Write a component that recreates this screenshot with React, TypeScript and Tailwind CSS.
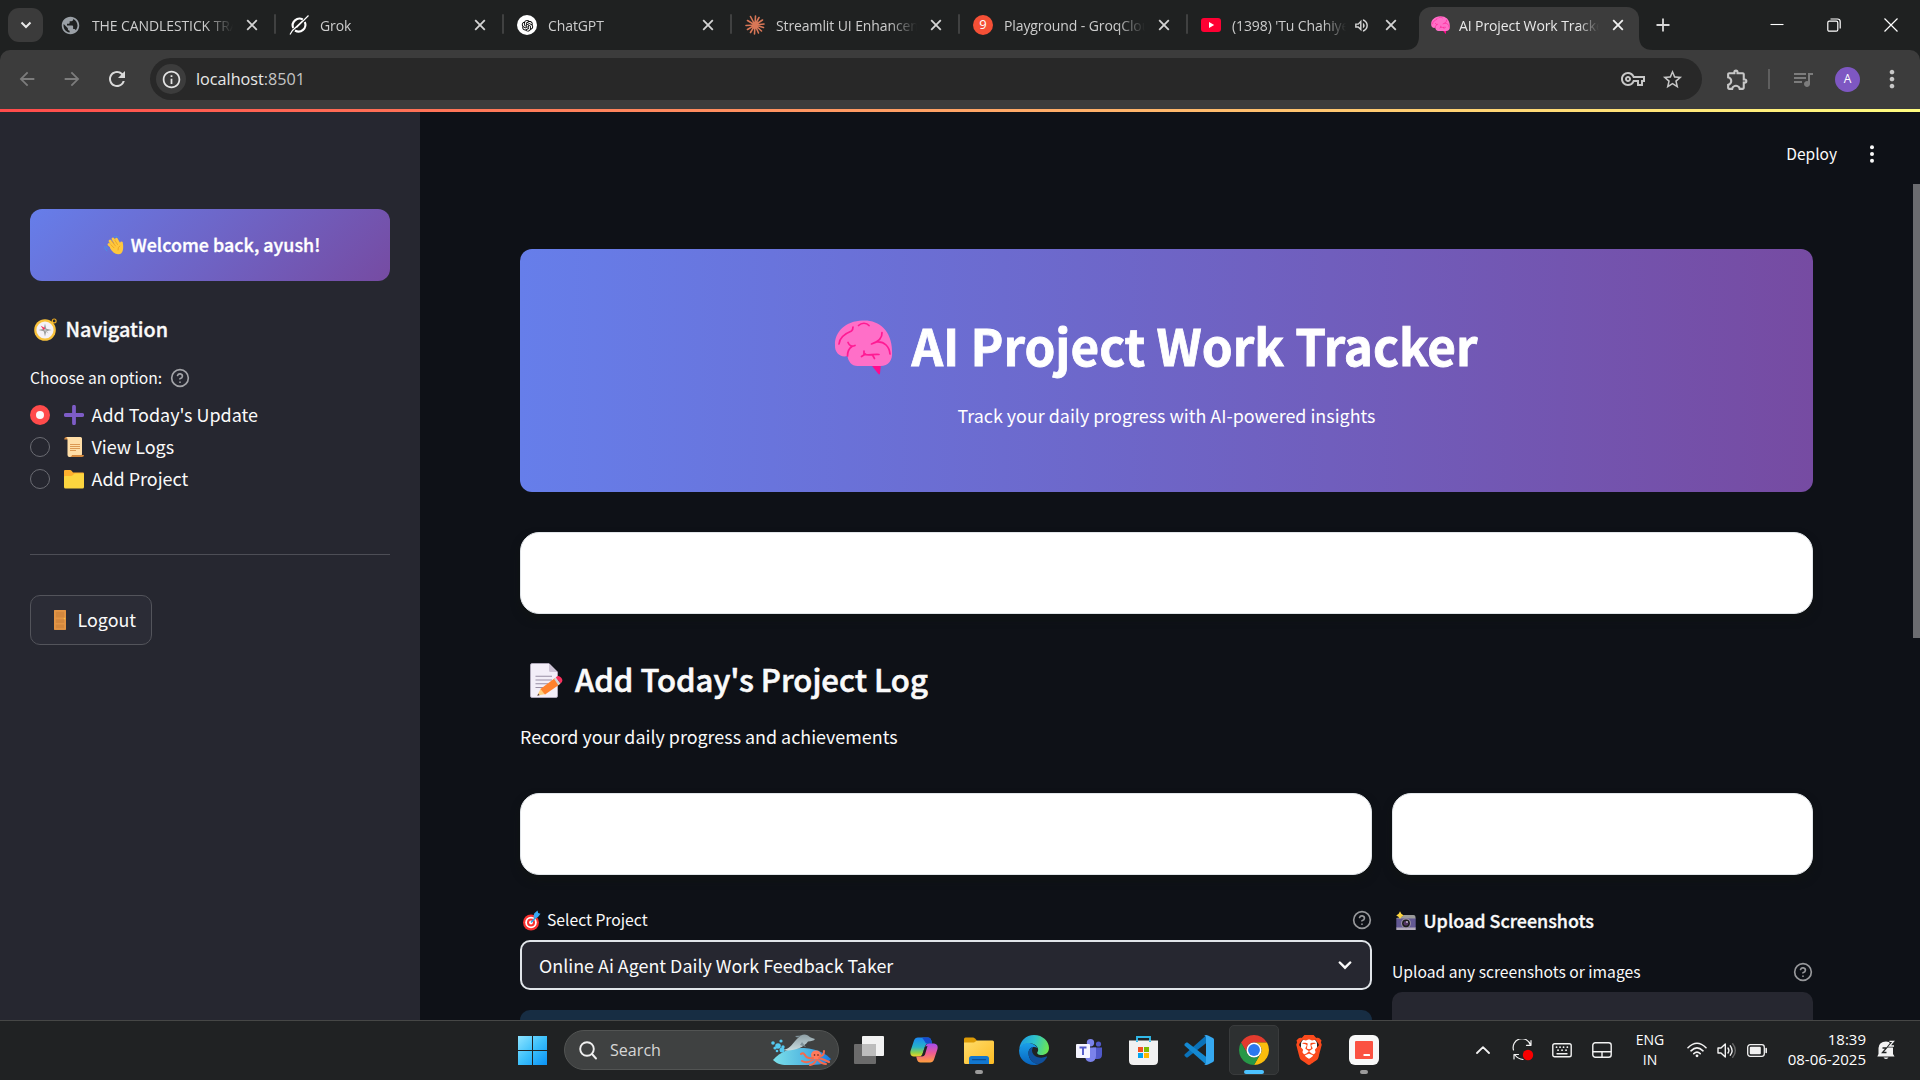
import type { ReactNode } from "react";
import {
  MdArrowBack,
  MdArrowForward,
  MdRefresh,
  MdInfoOutline,
  MdStarBorder,
  MdOutlineVpnKey,
  MdOutlineExtension,
  MdQueueMusic,
  MdMoreVert,
  MdOutlineVolumeUp,
  MdPublic,
} from "react-icons/md";
import { FiHelpCircle } from "react-icons/fi";
import { AiOutlineOpenAI } from "react-icons/ai";
import { SiBrave } from "react-icons/si";

/* ---------- Emoji drawings ---------- */

function Brain({ className }: { className: string }) {
  return (
    <svg viewBox="0 0 58 55" className={className}>
      <path d="M36 44 H46.500 L45.500 53.500 Q45 55.500 43.500 53.500 Z" fill="#ff0a8d" />
      <path
        d="M28 0.500 C36 0 44 2.500 49 8 C54 13 57.500 21 57.500 31 C58.500 40 54 46 46 46 H23 C17 46 13.500 41 13 36 C6 38 0 33 0.500 25 C0 12 11 1 28 0.500 Z"
        fill="#ff6fc8"
      />
      <g fill="none" stroke="#ff1a93" strokeWidth="1.700" strokeLinecap="round" strokeLinejoin="round">
        <path d="M4.500 24 C5 17 12 13 17 11 C18 10 18.500 8 18.500 7" />
        <path d="M24 5.500 C27 2.500 32 2.500 34.500 5.500" />
        <path d="M47.500 12.500 C48 19 43 22 37 24 M42 22 C50 21 55 27 55.500 34" />
        <path d="M13.500 22.500 C15 26 17.500 27 20.500 25.500 M17.500 26.500 C13.500 29 13 33 13 36" />
        <path d="M29.500 31 V34 C33 36 38 34 44.500 34.500 M38 35 L40 38.500 M27 36.500 L31 34" />
      </g>
    </svg>
  );
}

function Wave() {
  return (
    <svg viewBox="0 0 20 20" className="h-5 w-5">
      <g fill="none" stroke="#4a8ee8" strokeWidth="1" strokeLinecap="round">
        <path d="M10.500 1.500 Q14 0.500 15.500 3.500 M11 3.500 Q12.500 3 13.500 4.500 M0.700 11.500 Q0.300 15 3 16 M2.600 11.500 Q2.500 13.500 4 14.500" />
      </g>
      <g stroke="#ffc83d" strokeWidth="2.800" strokeLinecap="round">
        <path d="M6 6 L11 12 M9 4 L13 10 M12.500 4.300 L15 9 M5 9.500 L10 14 M17.500 8 L17 12" />
      </g>
      <path d="M6 11 L14 6.500 C16 8 16.500 10 16.500 11 L17.500 8 L19 9 C19.500 13 19.500 19 14.500 19.300 C11 19.500 8 17 6 13 Z" fill="#ffc83d" />
      <path d="M8 6.500 L11.500 11 M11 5.500 L13.500 9.500 M7 9.800 L10 12.800 M15.800 11 Q13.500 12 14 15" fill="none" stroke="#e59a1c" strokeWidth=".7" strokeLinecap="round" />
    </svg>
  );
}

function Compass() {
  return (
    <svg viewBox="0 0 23 23" className="h-[23px] w-[23px]">
      <circle cx="20.200" cy="2.900" r="1.900" fill="none" stroke="#e9a820" strokeWidth="1.200" />
      <circle cx="11" cy="12" r="10.800" fill="#f9c23c" />
      <circle cx="11" cy="12" r="8.600" fill="#f4f1f6" />
      <path d="M11 5.500 L12.300 10.700 L17.500 12 L12.300 13.300 L11 18.500 L9.700 13.300 L4.500 12 L9.700 10.700 Z" fill="#9b9b9b" />
      <path d="M8.500 9.500 L11.500 11 L14.500 15.500 L10.500 13 Z" fill="#bebebe" />
      <path d="M6.800 7.800 L11.300 10.300 L9.500 12 Z" fill="#f8315d" />
    </svg>
  );
}

function Scroll() {
  return (
    <svg viewBox="0 0 20 20" className="h-5 w-5">
      <path d="M0.300 1.800 Q0.500 0 2.500 0 H4 V2.500 H0.300 Z" fill="#d3883e" />
      <path d="M2 0 H16.500 Q18 0 18 1.500 V17.500 L16 20 H5.500 Q3.500 20 3.500 18 V2.500 Q3.500 0.300 2 0 Z" fill="#ffdea7" />
      <path d="M8 18 H20 Q20 20 18 20 H6 Q8 19.500 8 18 Z" fill="#d3883e" />
      <path d="M6 7.500 H16 M6 9.500 H16 M6 11.500 H16 M6 13.500 H12" stroke="#d3883e" strokeWidth=".8" />
    </svg>
  );
}

function FolderEmoji() {
  return (
    <svg viewBox="0 0 20 20" className="h-5 w-5">
      <path d="M0 2 Q0 1 1 1 H6 Q7 1 7.800 2 L9 3.500 H19 Q20 3.500 20 4.500 V10 H0 Z" fill="#ffb02e" />
      <path d="M0 8 Q0 7 1 7 H7 Q8 7 9 6 L10 5 Q10.500 4.500 11.500 4.500 H19 Q20 4.500 20 5.500 V18 Q20 19.500 18.500 19.500 H1.500 Q0 19.500 0 18 Z" fill="#fcd53f" />
    </svg>
  );
}

function Door() {
  return (
    <svg viewBox="0 0 12 20" className="h-5 w-3">
      <rect width="12" height="20" rx="1" fill="#d3883e" />
      <path d="M0 1 Q0 0 1 0 H11 Q12 0 12 1 V19.500 H0 Z M1.800 1.800 V7.500 H10.200 V1.800 Z M1.800 9.300 V13 H10.200 V9.300 Z M1.800 14.500 V18.300 H10.200 V14.500 Z" fill="#e39545" fillRule="evenodd" />
      <circle cx="10.500" cy="8.600" r=".8" fill="#f9c23c" />
    </svg>
  );
}

function Memo() {
  return (
    <svg viewBox="0 0 33 35" className="h-[35px] w-[33px]">
      <path d="M2 0.500 H19 L27.500 9 V33 Q27.500 34.500 26 34.500 H2 Q0.500 34.500 0.500 33 V2 Q0.500 0.500 2 0.500 Z" fill="#f3eef8" stroke="#b9b0c4" strokeWidth=".8" />
      <path d="M19 0.800 L27.300 9 H20.500 Q19 9 19 7.500 Z" fill="#cdc4d6" />
      <path d="M5.500 13.300 H22 M5.500 17 H22 M5.500 20.700 H18 M5.500 24.500 H13" stroke="#998ea4" strokeWidth="1.100" />
      <path d="M11 25 L7.300 32.500 L16 31 Z" fill="#ffce7c" />
      <path d="M8.300 30.500 L7.300 32.700 L9.600 32.200 Z" fill="#503b44" />
      <path d="M10.500 26 L25 15 L29.500 21.500 L15 31.500 Z" fill="#ff822d" />
      <path d="M24 15.800 L26 14.200 L30.500 20.500 L28.300 22.200 Z" fill="#d3d3d3" />
      <path d="M25.800 14.400 Q28.500 11.500 31 14.500 Q34 18 30.600 20.600 Z" fill="#f8315d" />
    </svg>
  );
}

function Target() {
  return (
    <svg viewBox="0 0 18 21" className="h-[21px] w-[18px]">
      <circle cx="8" cy="12.500" r="8" fill="#f8312f" />
      <circle cx="8" cy="12.500" r="5.800" fill="#fff" />
      <circle cx="8" cy="12.500" r="4" fill="#f8312f" />
      <circle cx="8" cy="12.500" r="1.900" fill="#fff" />
      <path d="M8 12.500 L13.500 6.500" stroke="#26a0e8" strokeWidth="1.600" />
      <path d="M10.500 6.500 L11.200 3.500 L14.500 0.500 L15.200 3 L17.500 3.800 L15 7 L12 8.500 Z" fill="#36a9f4" />
    </svg>
  );
}

function Camera() {
  return (
    <svg viewBox="0 0 20 20" className="h-5 w-5">
      <path d="M7 5 Q7 4 8 4 H17.500 Q19.500 4 19.500 6 V8 H0.500 V7 L3 6.500 Z" fill="#9b9b9b" />
      <rect x=".3" y="7.500" width="19.400" height="9.500" fill="#635994" />
      <rect x=".3" y="16.500" width="19.400" height="2.500" fill="#b4acbc" />
      <circle cx="10" cy="12.300" r="5" fill="#998ea4" />
      <circle cx="10" cy="12.300" r="3.900" fill="#1c1c1c" />
      <circle cx="10" cy="12.300" r="2.400" fill="#533566" />
      <circle cx="11" cy="11" r=".9" fill="#cdc4d6" />
      <path d="M4 0.300 L5.300 2.700 L7.800 4.500 L5.300 6 L4 8 L2.700 6 L0.200 4.500 L2.700 2.700 Z" fill="#fcd53f" />
    </svg>
  );
}

/* ---------- Browser chrome ---------- */

function CloseX({ bright = false }: { bright?: boolean }) {
  return (
    <svg viewBox="0 0 12 12" className="h-3 w-3">
      <path d="M1.200 1.200 L10.800 10.800 M10.800 1.200 L1.200 10.800" stroke={bright ? "#f1f1f1" : "#d4d4d4"} strokeWidth="1.800" />
    </svg>
  );
}

function Grok() {
  return (
    <svg viewBox="0 0 20 20" className="h-5 w-5">
      <path d="M15.800 7 A6.800 6.800 0 0 1 6 15.500 M4.200 13 A6.800 6.800 0 0 1 13.800 4.500" fill="none" stroke="#fff" strokeWidth="2.100" />
      <path d="M19.500 0.500 L7.500 12.500 M1 19.500 L3.500 15.500 L13.500 6" stroke="#fff" strokeWidth="1.200" fill="none" />
    </svg>
  );
}

function Burst() {
  return (
    <svg viewBox="0 0 20 20" className="h-5 w-5" stroke="#d97757" strokeLinecap="round">
      <path
        d="M10 10 L10.500 1 M10 10 L14 2.500 M10 10 L17.500 5 M10 10 L19 9 M10 10 L18.500 12.500 M10 10 L16.500 16 M10 10 L13.500 18 M10 10 L9.500 19 M10 10 L5.500 17.500 M10 10 L2.500 14.500 M10 10 L1 10.500 M10 10 L2.500 5.500 M10 10 L5.500 1.500"
        strokeWidth="1.600"
      />
    </svg>
  );
}

function YouTube() {
  return (
    <svg viewBox="0 0 20 14" className="h-[14px] w-5">
      <rect width="20" height="14" rx="3" fill="#ff0033" />
      <path d="M8 4 L13.200 7 L8 10 Z" fill="#fff" />
    </svg>
  );
}

function Tab({ icon, title, audio = false, divider = true }: { icon: ReactNode; title: string; audio?: boolean; divider?: boolean }) {
  return (
    <div className="relative flex h-[50px] w-[228px] shrink-0 items-center pl-[14px]">
      <div className="flex w-5 justify-center">{icon}</div>
      <div
        className={
          audio
            ? "ml-[11px] w-[114px] overflow-hidden whitespace-nowrap [mask-image:linear-gradient(90deg,#000_80%,transparent)]"
            : "ml-[11px] w-[141px] overflow-hidden whitespace-nowrap [mask-image:linear-gradient(90deg,#000_80%,transparent)]"
        }
      >
        {title}
      </div>
      {audio && <MdOutlineVolumeUp className="ml-[7px] mr-[7px] h-[17px] w-[17px] text-[#d4d4d4]" />}
      <div className={audio ? "ml-[8px]" : "ml-[13px]"}>
        <CloseX />
      </div>
      {divider && <div className="absolute -right-px top-[14px] h-5 w-[2px] rounded bg-[#404141]" />}
    </div>
  );
}

function TabStrip() {
  return (
    <div className="flex h-[50px] bg-[#1f2121] font-['Open_Sans',sans-serif] text-[14px] tracking-[-0.1px] text-[#cdcdcd]">
      <div className="flex w-[47px] items-center pl-2">
        <div className="flex h-[34px] w-[35px] items-center justify-center rounded-[11px] bg-[#3b3b3b]">
          <svg viewBox="0 0 12 8" className="h-2 w-3">
            <path d="M1.500 1.500 L6 6 L10.500 1.500" fill="none" stroke="#e8e8e8" strokeWidth="2" />
          </svg>
        </div>
      </div>
      <Tab icon={<MdPublic className="-ml-px h-[21px] w-[21px] text-[#9aa0a6]" />} title="THE CANDLESTICK TRADING" />
      <Tab icon={<Grok />} title="Grok" />
      <Tab
        icon={
          <div className="flex h-5 w-5 shrink-0 items-center justify-center rounded-full bg-white">
            <AiOutlineOpenAI className="h-[15px] w-[15px] text-black" />
          </div>
        }
        title="ChatGPT"
      />
      <Tab icon={<Burst />} title="Streamlit UI Enhancement" />
      <Tab
        icon={<div className="flex h-5 w-5 shrink-0 items-center justify-center rounded-full bg-[#f55036] text-[13px] text-white">9</div>}
        title="Playground - GroqCloud"
      />
      <Tab icon={<YouTube />} title="(1398) 'Tu Chahiye" audio divider={false} />
      <div className="flex h-[50px] w-[228px] items-end">
        <svg viewBox="0 0 14 14" className="-ml-[10px] h-[14px] w-[14px] shrink-0">
          <path d="M14 0 V14 H0 Q14 14 14 0 Z" fill="#3c3c3c" />
        </svg>
        <div className="flex h-[43px] w-[220px] shrink-0 items-center rounded-t-[12px] bg-[#3c3c3c] pb-[7px] pl-[12px] text-[#e8e8e8]">
          <Brain className="h-[22px] w-[19px]" />
          <div className="ml-[9px] w-[140px] overflow-hidden whitespace-nowrap [mask-image:linear-gradient(90deg,#000_85%,transparent)]">
            AI Project Work Tracker
          </div>
          <div className="ml-[13px]">
            <CloseX bright />
          </div>
        </div>
        <svg viewBox="0 0 14 14" className="h-[14px] w-[14px] shrink-0">
          <path d="M0 0 V14 H14 Q0 14 0 0 Z" fill="#3c3c3c" />
        </svg>
      </div>
      <svg viewBox="0 0 14 14" className="ml-[13px] mt-[18px] h-[14px] w-[14px]">
        <path d="M7 0.500 V13.500 M0.500 7 H13.500" stroke="#d8d8d8" strokeWidth="1.800" />
      </svg>
      <div className="ml-auto flex items-center gap-[43px] pr-[22px]">
        <svg viewBox="0 0 14 14" className="h-[14px] w-[14px]">
          <path d="M0.500 6.500 H13.500" stroke="#fff" strokeWidth="1.100" />
        </svg>
        <svg viewBox="0 0 14 14" className="h-[14px] w-[14px]" fill="none" stroke="#fff" strokeWidth="1.200">
          <rect x=".8" y="3.200" width="10" height="10" rx="1.500" />
          <path d="M3.500 1 H10.500 Q13.200 1 13.200 3.700 V10.500" />
        </svg>
        <svg viewBox="0 0 14 14" className="h-[14px] w-[14px]">
          <path d="M0.500 0.500 L13.500 13.500 M13.500 0.500 L0.500 13.500" stroke="#fff" strokeWidth="1.200" />
        </svg>
      </div>
    </div>
  );
}

function Toolbar() {
  return (
    <div className="bg-[#1f2121]">
      <div className="flex h-[59px] items-center rounded-t-[10px] bg-[#3c3c3c] pb-px text-[#c7c7c7]">
        <MdArrowBack className="ml-4 h-[22px] w-[22px] text-[#7c7c7c]" />
        <MdArrowForward className="ml-[23px] h-[22px] w-[22px] text-[#7c7c7c]" />
        <MdRefresh className="ml-[22px] h-[24px] w-[24px] text-[#dadada]" />
        <div className="ml-[21px] flex h-[42px] w-[1552px] shrink-0 items-center rounded-full bg-[#282828] pl-[6px] pr-[18px]">
          <div className="flex h-[30px] w-[30px] items-center justify-center rounded-full bg-[#3c3c3c]">
            <MdInfoOutline className="h-[21px] w-[21px] text-[#e3e3e3]" />
          </div>
          <span className="ml-[10px] font-['Open_Sans',sans-serif] text-[16.2px] text-[#e8e8e8]">
            localhost<span className="text-[#c4c4c4]">:8501</span>
          </span>
          <MdOutlineVpnKey className="ml-auto h-6 w-6 text-[#c7c7c7]" />
          <MdStarBorder className="ml-[16px] h-[23px] w-[23px] text-[#c7c7c7]" />
        </div>
        <MdOutlineExtension className="ml-[23px] h-[25px] w-[25px]" />
        <div className="ml-[18px] h-5 w-[2px] bg-[#5f5f5f]" />
        <MdQueueMusic className="ml-[21px] h-6 w-6 text-[#7c7c7c]" />
        <div className="ml-[20px] flex h-[25px] w-[25px] items-center justify-center rounded-full bg-[#7e57c2] font-['Open_Sans',sans-serif] text-[12px] text-white">
          A
        </div>
        <MdMoreVert className="ml-[18px] h-[28px] w-[28px]" />
      </div>
    </div>
  );
}

/* ---------- Sidebar ---------- */

function Option({ icon, label, selected = false }: { icon: ReactNode; label: string; selected?: boolean }) {
  return (
    <div className="flex h-8 items-center">
      {selected ? (
        <div className="flex h-5 w-5 items-center justify-center rounded-full bg-[#ff4b4b]">
          <div className="h-2 w-2 rounded-full bg-[#fafafa]" />
        </div>
      ) : (
        <div className="h-5 w-5 rounded-full border border-[#6b6c73]" />
      )}
      <div className="ml-[14px] flex h-5 w-5 items-center justify-center">{icon}</div>
      <span className="ml-[7.5px] pb-[2px] text-[17.95px]">{label}</span>
    </div>
  );
}

function Sidebar() {
  return (
    <aside className="h-full w-[420px] shrink-0 bg-[#262730] px-[30px] pt-[97px]">
      <div className="flex h-[72px] items-center justify-center gap-[7px] rounded-[12px] bg-[linear-gradient(135deg,#667eea_0%,#764ba2_100%)] pl-1 text-white">
        <Wave />
        <span className="pb-[2px] text-[17.9px] font-medium [-webkit-text-stroke:0.35px]">Welcome back, ayush!</span>
      </div>
      <div className="mt-[33px] flex h-[30px] items-center pl-1">
        <Compass />
        <span className="ml-[8.5px] text-[19.8px] font-medium [-webkit-text-stroke:0.35px]">Navigation</span>
      </div>
      <div className="mt-[22px] flex h-6 items-center">
        <span className="text-[15.65px]">Choose an option:</span>
        <FiHelpCircle className="ml-[8px] h-5 w-5 text-[#a3a4a8]" />
      </div>
      <div className="mt-[9px]">
        <Option
          selected
          label="Add Today's Update"
          icon={
            <svg viewBox="0 0 20 20" className="h-5 w-5">
              <path d="M10 1.700 V18.300 M1.700 10 H18.300" stroke="#7d5cc6" strokeWidth="3.800" strokeLinecap="round" />
            </svg>
          }
        />
        <Option label="View Logs" icon={<Scroll />} />
        <Option label="Add Project" icon={<FolderEmoji />} />
      </div>
      <div className="mt-[59px] h-px bg-[#4d4e56]" />
      <div className="mt-10 flex h-[50px] w-[122px] items-center rounded-[10px] border border-[#53545b] bg-[#2b2c36] pl-[23px]">
        <Door />
        <span className="ml-[11.5px] pb-[2px] text-[17.9px]">Logout</span>
      </div>
    </aside>
  );
}

/* ---------- Main area ---------- */

const Card = () => <div className="h-[82px] rounded-[19px] border border-[#e1e5e9] bg-white shadow-[0_5px_8px_rgba(16,20,16,0.6)]" />;

function Main() {
  return (
    <main className="relative h-full grow bg-[#0e1117] pl-[100px]">
      <div className="flex h-[84px] items-center justify-end pr-[46px]">
        <span className="text-[15.5px]">Deploy</span>
        <svg viewBox="0 0 4 18" className="ml-[33px] h-[18px] w-1" fill="#fafafa">
          <circle cx="2" cy="2.300" r="2" />
          <circle cx="2" cy="9" r="2" />
          <circle cx="2" cy="15.700" r="2" />
        </svg>
      </div>
      <div className="w-[1293px]">
        <div className="mt-[53px] h-[243px] rounded-[12px] bg-[linear-gradient(90deg,#667eea_0%,#764ba2_100%)] pt-[66px] text-white">
          <div className="flex h-[60px] items-center justify-center pr-[21px]">
            <Brain className="mt-1 h-[55px] w-[59px]" />
            <h1 className="ml-[18px] whitespace-nowrap text-[49.4px] font-bold leading-[60px] [-webkit-text-stroke:0.8px]">AI Project Work Tracker</h1>
          </div>
          <p className="mt-[26px] text-center text-[17.9px] leading-7">Track your daily progress with AI-powered insights</p>
        </div>
        <div className="mt-10">
          <Card />
        </div>
        <div className="mt-[46px] flex h-10 items-center pl-[10px]">
          <Memo />
          <h2 className="ml-3 pb-[2px] text-[31.05px] font-medium leading-10 [-webkit-text-stroke:0.6px]">Add Today's Project Log</h2>
        </div>
        <p className="mt-[22px] text-[17.9px] leading-7">Record your daily progress and achievements</p>
        <div className="mt-[43px] grid grid-cols-[852px_421px] gap-5">
          <div>
            <Card />
            <div className="mt-[33px] flex h-6 items-center pl-[3px]">
              <Target />
              <span className="ml-[6px] text-[15.7px]">Select Project</span>
              <FiHelpCircle className="ml-auto h-5 w-5 text-[#97989b]" />
            </div>
            <div className="mt-2 flex h-[50px] items-center justify-between rounded-[10px] border-2 border-[#e1e5e9] bg-[#262730] pl-[17px] pr-[18px]">
              <span className="text-[17.9px]">Online Ai Agent Daily Work Feedback Taker</span>
              <svg viewBox="0 0 14 9" className="h-[9px] w-[14px]">
                <path d="M1.800 1.500 L7 6.700 L12.200 1.500" fill="none" stroke="#fafafa" strokeWidth="2.400" strokeLinecap="round" />
              </svg>
            </div>
            <div className="mt-5 h-10 rounded-[10px] bg-[#172d43]" />
          </div>
          <div>
            <Card />
            <div className="mt-8 flex h-7 items-center pl-1">
              <Camera />
              <span className="ml-[7.5px] pb-[2px] text-[17.9px] font-medium [-webkit-text-stroke:0.35px]">Upload Screenshots</span>
            </div>
            <div className="mt-[25px] flex h-6 items-center justify-between">
              <span className="text-[15.65px]">Upload any screenshots or images</span>
              <FiHelpCircle className="h-5 w-5 text-[#97989b]" />
            </div>
            <div className="mt-2 h-14 rounded-[10px] bg-[#262730]" />
          </div>
        </div>
      </div>
      <div className="absolute right-0 top-[72px] h-[454px] w-[7px] bg-[#6b6c70]" />
    </main>
  );
}

/* ---------- Taskbar ---------- */

function Dolphin() {
  return (
    <svg viewBox="0 0 60 32" className="h-8 w-[60px]">
      <defs>
        <linearGradient id="sea" x1="0" x2="1">
          <stop offset="0" stopColor="#7be0ea" />
          <stop offset=".6" stopColor="#4fb3e0" />
          <stop offset="1" stopColor="#1479e8" />
        </linearGradient>
        <linearGradient id="skin" x1="0" y1="0" x2="0" y2="1">
          <stop offset="0" stopColor="#8fa0a6" />
          <stop offset="1" stopColor="#c9dcdf" />
        </linearGradient>
      </defs>
      <path d="M2 26 C10 17 20 13.500 33 14 C47 15 55 20 60 25 C56 30 48 31 36 31 H16 C9 31 5 29 2 26 Z" fill="url(#sea)" />
      <path d="M12 16 C20 15 22 8 28 3 C30 1 33 -0.500 37 1.500 C38 3 41 4 44 5 C43 7 40 7 37 7.500 C33 13 24 17 15 16.500 Z" fill="url(#skin)" />
      <path d="M31 8 L35 13 L29 11 Z M26 3.500 L24 2 L31 1.500 Z" fill="#7f9299" />
      <g fill="#55c9f0">
        <circle cx="2" cy="9" r="1.800" />
        <circle cx="7" cy="12" r="2.800" />
        <circle cx="10" cy="7" r="1.600" />
        <circle cx="4" cy="14" r="1.600" />
        <circle cx="12" cy="13" r="1.700" />
        <circle cx="11" cy="16" r="2.500" />
        <circle cx="6" cy="17" r="1.300" />
      </g>
      <ellipse cx="45" cy="21" rx="5" ry="4.500" fill="#ff7a5c" />
      <path d="M42 24 Q36 25 34 21 Q32 18 30 20 M42 26 Q36 30 31 27 M45 26 Q44 30 39 31 M47 26 Q51 30 55 30 M48 24 Q54 26 58 28 M49 22 Q53 22 53 17" fill="none" stroke="#f46a4e" strokeWidth="2" strokeLinecap="round" />
      <circle cx="43.500" cy="21" r=".8" fill="#4a1a16" />
      <circle cx="47" cy="21" r=".8" fill="#4a1a16" />
    </svg>
  );
}

function AppSlot({ children, running = false }: { children: ReactNode; running?: boolean }) {
  return (
    <div className="relative flex h-[50px] w-[55px] items-center justify-center">
      {children}
      {running && <div className="absolute bottom-[1px] left-[24px] h-1 w-2 rounded-full bg-[#9b9b9b]" />}
    </div>
  );
}

function Copilot() {
  return (
    <svg viewBox="0 0 28 26" className="h-[26px] w-7">
      <defs>
        <linearGradient id="cpa" x1="0" y1="0" x2="0" y2="1">
          <stop offset="0" stopColor="#1b87f3" />
          <stop offset=".5" stopColor="#27b3c8" />
          <stop offset=".8" stopColor="#8fd14a" />
          <stop offset="1" stopColor="#f5d327" />
        </linearGradient>
        <linearGradient id="cpb" x1="0" y1="0" x2="0" y2="1">
          <stop offset="0" stopColor="#a44cf0" />
          <stop offset=".5" stopColor="#ee5a94" />
          <stop offset="1" stopColor="#ffa03c" />
        </linearGradient>
      </defs>
      <path d="M8 0.500 H18 Q20.500 0.500 21.300 3.500 L22 6.500 H18.500 Q15.800 6.500 15 9.500 L12.500 17 Q11.800 19.500 9 19.500 H4 Q-0.500 19 0.500 14 L4 3.500 Q5 0.500 8 0.500 Z" fill="url(#cpa)" />
      <path d="M12 0.500 H18 Q20.500 0.500 21.300 3.500 L22 6.500 H16 Q14 3 12 0.500 Z" fill="#174ccf" />
      <path d="M20 25.500 H10.500 Q7.800 25.500 7 22.500 L6.200 19.500 H9.500 Q12.200 19.500 13 16.500 L15.500 9 Q16.300 6.500 19 6.500 H24 Q28.500 7 27.500 12 L24 22.500 Q23 25.500 20 25.500 Z" fill="url(#cpb)" />
      <path d="M15 9.500 L17.500 9 L15 17.500 Q14.300 19.500 12 19.500 L10.500 19.300 Q12 18.700 12.500 17 Z" fill="#202223" />
    </svg>
  );
}

function Explorer() {
  return (
    <svg viewBox="0 0 30 27" className="h-[27px] w-[30px]">
      <defs>
        <linearGradient id="fold" x1="0" y1="0" x2="1" y2="1">
          <stop offset="0" stopColor="#ffdc6b" />
          <stop offset="1" stopColor="#fdbc23" />
        </linearGradient>
      </defs>
      <path d="M0 2 Q0 0.500 1.500 0.500 H9 Q10 0.500 11 1.500 L13 3.500 V8 H0 Z" fill="#dd9b06" />
      <path d="M0 5.500 H10 L13 3.500 H28.500 Q30 3.500 30 5 V25.500 Q30 27 28.500 27 H1.500 Q0 27 0 25.500 Z" fill="url(#fold)" />
      <path d="M5 27 V21.500 Q5 19 7.500 19 H22.500 Q25 19 25 21.500 V27 Z" fill="#1277cf" />
      <path d="M8.500 22.700 H21.500" stroke="#0b4e94" strokeWidth="1.200" strokeLinecap="round" />
    </svg>
  );
}

function Edge() {
  return (
    <svg viewBox="0 0 30 30" className="h-[30px] w-[30px]">
      <defs>
        <linearGradient id="eda" x1="0" y1=".3" x2="1" y2=".5">
          <stop offset="0" stopColor="#1d9ae6" />
          <stop offset=".5" stopColor="#2fc3c9" />
          <stop offset="1" stopColor="#6be653" />
        </linearGradient>
        <linearGradient id="edb" x1="0" y1="0" x2="0" y2="1">
          <stop offset="0" stopColor="#1aa0ea" />
          <stop offset="1" stopColor="#0863bd" />
        </linearGradient>
      </defs>
      <path d="M0.300 14 C1 6 7 0 15 0 C24 0 30 6.500 30 13 C30 17.500 26.500 20 22.500 20 C19 20 17.500 18.500 18.500 17 C20 15 19 11.500 15.500 9.500 C10 6.500 3 9 0.300 14 Z" fill="url(#eda)" />
      <path d="M0.100 15 C1 10 6 7.500 10.500 8 C14 8.500 17 10.500 18.500 13 C14 10.500 9.500 13 9.500 18 C9.500 25 15 29 20 29 C18.500 29.700 17 30 15 30 C6 30 -0.500 23 0.100 15 Z" fill="url(#edb)" />
      <path d="M9.500 18 C9.500 14.500 12 12 14.500 11.700 C12.500 14 12.500 17 14.500 19.500 C17.500 23 23.500 23.500 27.300 21.500 C28 21.200 28.400 21.700 28 22.300 C26 26 22.500 28.700 19.500 29.100 C14.500 29 9.500 24.500 9.500 18 Z" fill="#10509c" />
    </svg>
  );
}

function Teams() {
  return (
    <svg viewBox="0 0 26 23" className="h-[23px] w-[26px]">
      <circle cx="22.500" cy="5" r="2.600" fill="#5059c9" />
      <path d="M17 8.500 H26 V15.500 Q26 20 21.500 20 H17 Z" fill="#5059c9" />
      <circle cx="14.500" cy="3.700" r="3.700" fill="#7b83eb" />
      <path d="M9 8.500 H20 V16.500 Q20 22.500 14.500 23 Q9 22.500 9 16.500 Z" fill="#7b83eb" />
      <rect y="5" width="14" height="14" rx="1" fill="#f4f4ff" />
      <path d="M3.500 8.500 H10.500 M7 8.500 V16" stroke="#5059c9" strokeWidth="1.900" />
    </svg>
  );
}

function Store() {
  return (
    <svg viewBox="0 0 29 29" className="h-[29px] w-[29px]">
      <path d="M8 6 V1 H21 V6" fill="none" stroke="#31b9e8" strokeWidth="1.900" />
      <path d="M0 4.500 H29 V24.500 Q29 29 24.500 29 H4.500 Q0 29 0 24.500 Z" fill="#f1f1f1" />
      <path d="M8 4.500 V6 M21 4.500 V6" stroke="#31b9e8" strokeWidth="1.900" />
      <path d="M9 11 H14 V16 H9 Z" fill="#f25022" />
      <path d="M15 11 H20 V16 H15 Z" fill="#7fba00" />
      <path d="M9 17 H14 V22 H9 Z" fill="#00a4ef" />
      <path d="M15 17 H20 V22 H15 Z" fill="#ffb900" />
    </svg>
  );
}

function VsCode() {
  return (
    <svg viewBox="0 0 30 30" className="h-[30px] w-[30px]">
      <path d="M22 0.500 L22 8.200 L3.500 22.500 L2.300 22.500 L0.500 20.800 L0.500 19.500 Z" fill="#0a72b9" />
      <path d="M0.500 9 L2.300 7.500 L3.500 7.500 L22 21.800 V29.500 L0.500 10.500 Z" fill="#1489d2" />
      <path d="M20 29.200 Q22 30.500 24 29.500 L29 27 Q30 26.500 30 25.200 V4.800 Q30 3.500 29 3 L24 0.500 Q22 -0.500 20 0.800 Q22 0.500 22 2.500 V27.500 Q22 29.500 20 29.200 Z" fill="#35a8f0" />
    </svg>
  );
}

function Chrome() {
  return (
    <svg viewBox="0 0 48 48" className="h-[30px] w-[30px]">
      <path d="M24 12 H44.780 A24 24 0 0 0 3.220 12 L13.600 30 A12 12 0 0 1 24 12 Z" fill="#e33b2e" />
      <path d="M24 12 H44.780 A24 24 0 0 0 3.220 12 L13.600 30 A12 12 0 0 1 24 12 Z" fill="#fbbd0d" transform="rotate(120 24 24)" />
      <path d="M24 12 H44.780 A24 24 0 0 0 3.220 12 L13.600 30 A12 12 0 0 1 24 12 Z" fill="#279847" transform="rotate(240 24 24)" />
      <circle cx="24" cy="24" r="12" fill="#fff" />
      <circle cx="24" cy="24" r="9.500" fill="#2b78ee" />
    </svg>
  );
}

function Tray() {
  const line = { fill: "none", stroke: "#f2f2f2", strokeLinecap: "round" as const, strokeLinejoin: "round" as const };
  return (
    <div className="ml-auto flex items-center font-['Open_Sans',sans-serif] text-white">
      <svg viewBox="0 0 14 8" className="h-2 w-[14px]" {...line} strokeWidth="1.800">
        <path d="M1 7 L7 1.200 L13 7" />
      </svg>
      <svg viewBox="0 0 22 22" className="ml-[22px] h-[22px] w-[22px]" {...line} strokeWidth="1.200">
        <path d="M1.500 11 A8.600 8.600 0 0 1 18.500 6 M19 1.500 V6.300 H14.500 M2 20 V15.500 H6.500 M3 16 Q6 20 11 20.500" />
        <circle cx="16" cy="16" r="5.200" fill="#f90000" stroke="none" />
      </svg>
      <svg viewBox="0 0 20 15" className="ml-[18px] h-[15px] w-5" {...line} strokeWidth="1.400">
        <rect x=".8" y=".8" width="18.400" height="13" rx="1.800" />
        <path d="M4.500 4.200 h.1 M8 4.200 h.1 M11.500 4.200 h.1 M15.300 4.200 h.1 M6 7.200 h.1 M10 7.200 h.1 M14 7.200 h.1" strokeWidth="1.700" />
        <path d="M5 10.800 H15" />
      </svg>
      <svg viewBox="0 0 20 16" className="ml-5 h-4 w-5" {...line} strokeWidth="1.400">
        <rect x=".8" y=".8" width="18.400" height="14.400" rx="2.500" />
        <path d="M1 9.800 H19 M10 9.800 V15" />
      </svg>
      <div className="ml-[22px] w-[32px] text-center text-[14px] leading-5">
        <div>ENG</div>
        <div>IN</div>
      </div>
      <svg viewBox="0 0 20 16" className="ml-[21px] h-4 w-5" {...line} strokeWidth="1.600">
        <path d="M1 5.700 Q10 -3.200 19 5.700 M4 8.800 Q10 3 16 8.800 M6.800 11.600 Q10 8.800 13.200 11.600" />
        <circle cx="10" cy="13.800" r="1.400" fill="#f2f2f2" stroke="none" />
      </svg>
      <svg viewBox="0 0 20 17" className="ml-[10px] h-[17px] w-5" {...line} strokeWidth="1.400">
        <path d="M1 6 H4 L8.300 2 V15 L4 11 H1 Z M11 6 Q12.800 8.500 11 11 M13.300 3.800 Q16.800 8.500 13.300 13.200" />
        <path d="M15.700 1.700 Q21 8.500 15.700 15.300" stroke="#666" />
      </svg>
      <svg viewBox="0 0 20 13" className="ml-[10px] h-[13px] w-5" {...line} strokeWidth="1.300">
        <rect x=".7" y=".7" width="16.600" height="11.600" rx="2.500" />
        <rect x="2.800" y="2.800" width="11" height="7.400" rx="1" fill="#f2f2f2" stroke="none" />
        <path d="M19.200 4.500 V8.500" strokeWidth="1.600" />
      </svg>
      <div className="ml-5 w-[79px] pb-[2px] text-right text-[15px] leading-5">
        <div>18:39</div>
        <div>08-06-2025</div>
      </div>
      <svg viewBox="0 0 18 20" className="ml-[11px] mr-[25px] h-5 w-[18px]">
        <path d="M1.500 14 V8 Q2 1.500 9 1.500 Q15.500 2 16 8 V14 L17.500 16.500 H0.300 Z M6.500 17.500 H11.500 Q9 20.500 6.500 17.500" fill="#f2f2f2" />
        <path d="M5.500 8 H9.500 L5.500 12.500 H9.500" fill="none" stroke="#1f2222" strokeWidth="1.300" />
        <path d="M12 1 H16.500 L12.500 6 H17" fill="none" stroke="#1f2222" strokeWidth="3" />
        <path d="M12.500 1.300 H16.500 L12.500 6 H17" fill="none" stroke="#f2f2f2" strokeWidth="1.300" />
      </svg>
    </div>
  );
}

function Taskbar() {
  return (
    <div className="flex h-[60px] items-center border-t border-[#464746] bg-[#202223] pb-px">
      <svg viewBox="0 0 29 29" className="ml-[518px] h-[29px] w-[29px]">
        <defs>
          <linearGradient id="win" x1="0" y1="0" x2="1" y2="1">
            <stop offset="0" stopColor="#8fe4ff" />
            <stop offset=".5" stopColor="#3cc0fb" />
            <stop offset="1" stopColor="#0a92f5" />
          </linearGradient>
        </defs>
        <path d="M0 0 H14 V14 H0 Z M15 0 H29 V14 H15 Z M0 15 H14 V29 H0 Z M15 15 H29 V29 H15 Z" fill="url(#win)" />
      </svg>
      <div className="ml-[17px] flex h-10 w-[275px] items-center rounded-full border border-[#525453] bg-[#3f4141] pl-[14px] pr-[7px]">
        <svg viewBox="0 0 18 19" className="h-[19px] w-[18px]" fill="none" stroke="#f0f0f0" strokeWidth="1.900" strokeLinecap="round">
          <circle cx="8" cy="8" r="6.800" />
          <path d="M13 13 L17 17.500" />
        </svg>
        <span className="ml-[13px] font-['Open_Sans',sans-serif] text-[16.1px] text-[#d6d6d6]">Search</span>
        <div className="ml-auto">
          <Dolphin />
        </div>
      </div>
      <div className="ml-[2px] flex">
        <AppSlot>
          <svg viewBox="0 0 30 28" className="h-7 w-[30px]">
            <rect x="8" width="22" height="20" rx="1" fill="#f2f2f2" />
            <rect y="8" width="22" height="20" rx="1" fill="#6b6b6b" />
            <rect x="8" y="8" width="14" height="12" fill="#bdbdbd" />
          </svg>
        </AppSlot>
        <AppSlot>
          <Copilot />
        </AppSlot>
        <AppSlot running>
          <Explorer />
        </AppSlot>
        <AppSlot>
          <Edge />
        </AppSlot>
        <AppSlot>
          <Teams />
        </AppSlot>
        <AppSlot>
          <Store />
        </AppSlot>
        <AppSlot>
          <VsCode />
        </AppSlot>
        <AppSlot>
          <div className="relative flex h-[50px] w-[50px] items-center justify-center rounded-[5px] border border-[#393b3c] bg-[#2d3031]">
            <Chrome />
            <div className="absolute bottom-0 left-[14px] h-1 w-5 rounded-full bg-[#4cc2ff]" />
          </div>
        </AppSlot>
        <AppSlot>
          <div className="relative flex h-[30px] w-[26px] items-center justify-center">
            <div className="absolute left-[5px] top-[4px] h-[20px] w-4 rounded-[5px] bg-white" />
            <SiBrave className="relative h-[30px] w-[30px] shrink-0 text-[#fb4a1c]" />
          </div>
        </AppSlot>
        <AppSlot running>
          <svg viewBox="0 0 30 30" className="h-[30px] w-[30px]">
            <rect width="30" height="30" rx="6" fill="#f8f8f8" />
            <rect x="6" y="6" width="18" height="18" rx="1" fill="#fb5242" />
            <rect x="14.500" y="19" width="6.500" height="2" rx=".5" fill="#fff" />
          </svg>
        </AppSlot>
      </div>
      <Tray />
    </div>
  );
}

export default function App() {
  return (
    <div className="flex h-[1080px] w-[1920px] flex-col overflow-hidden font-['Noto_Sans_CJK_SC',sans-serif] text-[#fafafa]">
      <TabStrip />
      <Toolbar />
      <div className="h-[3px] bg-[linear-gradient(90deg,#ff4b4b,#fffd80)]" />
      <div className="flex h-[908px] overflow-hidden">
        <Sidebar />
        <Main />
      </div>
      <Taskbar />
    </div>
  );
}
